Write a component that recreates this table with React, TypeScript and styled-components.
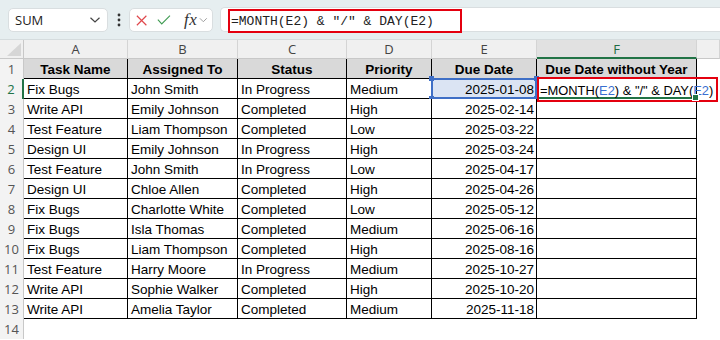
import React from "react";
import styled, { createGlobalStyle } from "styled-components";

const GlobalStyle = createGlobalStyle`
  html, body { margin: 0; padding: 0; background: #ffffff; overflow: hidden; }
  body { font-family: "Liberation Sans", Arial, sans-serif; }
`;

const Frame = styled.div`
  width: 720px;
  height: 340px;
  display: flex;
  flex-direction: column;
  overflow: hidden;
`;

const Toolbar = styled.div`
  height: 40px;
  box-sizing: border-box;
  background: #e6eef0;
  border-bottom: 1px solid #d5dcde;
  display: flex;
  align-items: flex-start;
  padding: 7px 0 0 8px;
`;

const NameBox = styled.div`
  width: 100px;
  height: 24px;
  margin-top: 1px;
  box-sizing: border-box;
  background: #fff;
  border: 1px solid #d9dee0;
  border-radius: 5px;
  display: flex;
  align-items: center;
  justify-content: space-between;
  padding: 0 6px 0 6px;
  font-family: "Open Sans", "Liberation Sans", sans-serif;
  font-size: 13px;
  color: #222;
`;

const Dots = styled.div`
  width: 21px;
  height: 26px;
  display: flex;
  align-items: center;
  justify-content: center;
`;

const FxBox = styled.div`
  width: 84px;
  height: 24px;
  margin-top: 1px;
  box-sizing: border-box;
  background: #fff;
  border: 1px solid #d9dee0;
  border-radius: 5px;
  display: flex;
  align-items: center;
  gap: 10px;
  padding: 0 4px 0 6px;
`;

const Fx = styled.span`
  font-family: "Liberation Serif", "DejaVu Serif", serif;
  font-style: italic;
  font-size: 17px;
  color: #333;
  margin-left: 3px;
  letter-spacing: 0.5px;
`;

const FormulaBox = styled.div`
  flex: 1;
  height: 25px;
  margin-left: 7px;
  box-sizing: border-box;
  background: #fff;
  border: 1px solid #d9dee0;
  border-right: none;
  border-radius: 5px 0 0 5px;
  position: relative;
`;

const FormulaHighlight = styled.div`
  position: absolute;
  left: 7px;
  top: 1px;
  width: 234px;
  height: 24px;
  box-sizing: border-box;
  border: 2px solid #e4000f;
  display: flex;
  align-items: center;
  padding-left: 1px;
  font-family: "Liberation Mono", "DejaVu Sans Mono", monospace;
  font-size: 13px;
  color: #222;
  white-space: pre;
`;

const Grid = styled.div`
  display: grid;
  grid-template-columns: 24px 104px 110px 109px 85px 105px 160px 23px;
  grid-template-rows: 19px repeat(14, 20px);
`;

const Corner = styled.div`
  background: #f0f0f0;
  border-bottom: 1px solid #c8c8c8;
  border-right: 1px solid #c8c8c8;
  box-sizing: border-box;
  display: flex;
  align-items: flex-end;
  justify-content: flex-end;
  padding: 0 2px 2px 0;
`;

const ColHeader = styled.div<{ $active?: boolean }>`
  box-sizing: border-box;
  background: ${(p) => (p.$active ? "#e1e1e1" : "#f0f0f0")};
  border-right: 1px solid #d4d4d4;
  border-bottom: ${(p) => (p.$active ? "2px solid #217346" : "1px solid #c8c8c8")};
  font-family: "Open Sans", "Liberation Sans", sans-serif;
  font-size: 13px;
  color: ${(p) => (p.$active ? "#1d6b43" : "#444")};
  display: flex;
  align-items: center;
  justify-content: center;
  padding-top: ${(p) => (p.$active ? "1px" : "0")};
`;

const RowHeader = styled.div<{ $active?: boolean }>`
  box-sizing: border-box;
  background: #f3f3f3;
  border-right: ${(p) => (p.$active ? "2px solid #217346" : "1px solid #c8c8c8")};
  font-family: "Open Sans", "Liberation Sans", sans-serif;
  font-size: 13px;
  color: ${(p) => (p.$active ? "#217346" : "#555")};
  display: flex;
  align-items: center;
  justify-content: center;
`;

const Cell = styled.div<{ $head?: boolean; $right?: boolean; $boxed?: boolean }>`
  box-sizing: border-box;
  position: relative;
  background: ${(p) => (p.$head ? "#d9d9d9" : "#fff")};
  border-right: ${(p) => (p.$boxed ? "1px solid #000" : "none")};
  border-bottom: ${(p) => (p.$boxed ? "1px solid #000" : "none")};
  font-size: 13.5px;
  font-weight: ${(p) => (p.$head ? 700 : 400)};
  color: #000;
  white-space: nowrap;
  display: flex;
  align-items: center;
  justify-content: ${(p) => (p.$head ? "center" : p.$right ? "flex-end" : "flex-start")};
  padding: 1px 3px 0 3px;
  padding-right: ${(p) => (p.$right ? "2px" : "3px")};
`;

const SelectedCell = styled(Cell)`
  background: #dbe4f3;
`;

const SelectionFrame = styled.div`
  position: absolute;
  left: -1px;
  top: -1px;
  right: -1px;
  bottom: -1px;
  border: 2px solid #3f6fc6;
  pointer-events: none;
`;

const Handle = styled.span<{ $x: "left" | "right"; $y: "top" | "bottom" }>`
  position: absolute;
  width: 5px;
  height: 5px;
  background: #3f6fc6;
  ${(p) => p.$x}: -4px;
  ${(p) => p.$y}: -4px;
`;

const ActiveCell = styled(Cell)`
  overflow: visible;
  border-bottom: 2px solid #217346;
  z-index: 2;
`;

const FillHandle = styled.span`
  position: absolute;
  right: -3px;
  bottom: -4px;
  width: 5px;
  height: 5px;
  background: #217346;
  border: 1px solid #fff;
`;

const InCellFormula = styled.div`
  position: absolute;
  left: 0px;
  top: -2px;
  width: 181px;
  height: 25px;
  box-sizing: border-box;
  border: 2px solid #e4000f;
  display: flex;
  align-items: center;
  padding: 1px 0 0 1px;
  font-size: 12.9px;
  color: #000;
  white-space: pre;
`;

const Ref = styled.span`
  color: #3a6fd0;
`;

const Blank = styled.div``;

const rows: [string, string, string, string, string][] = [
  ["Fix Bugs", "John Smith", "In Progress", "Medium", "2025-01-08"],
  ["Write API", "Emily Johnson", "Completed", "High", "2025-02-14"],
  ["Test Feature", "Liam Thompson", "Completed", "Low", "2025-03-22"],
  ["Design UI", "Emily Johnson", "In Progress", "High", "2025-03-24"],
  ["Test Feature", "John Smith", "In Progress", "Low", "2025-04-17"],
  ["Design UI", "Chloe Allen", "Completed", "High", "2025-04-26"],
  ["Fix Bugs", "Charlotte White", "Completed", "Low", "2025-05-12"],
  ["Fix Bugs", "Isla Thomas", "Completed", "Medium", "2025-06-16"],
  ["Fix Bugs", "Liam Thompson", "Completed", "High", "2025-08-16"],
  ["Test Feature", "Harry Moore", "In Progress", "Medium", "2025-10-27"],
  ["Write API", "Sophie Walker", "Completed", "High", "2025-10-20"],
  ["Write API", "Amelia Taylor", "Completed", "Medium", "2025-11-18"],
];

const headers = ["Task Name", "Assigned To", "Status", "Priority", "Due Date", "Due Date without Year"];

const Chevron = () => (
  <svg width="12" height="8" viewBox="0 0 12 8">
    <path d="M1.5 1.8 L6 6 L10.5 1.8" fill="none" stroke="#444" strokeWidth="1.2" />
  </svg>
);

export default function App() {
  return (
    <Frame>
      <GlobalStyle />
      <Toolbar>
        <NameBox>
          <span>SUM</span>
          <Chevron />
        </NameBox>
        <Dots>
          <svg width="4" height="16" viewBox="0 0 4 16">
            <circle cx="2" cy="3" r="1.4" fill="#333" />
            <circle cx="2" cy="8" r="1.4" fill="#333" />
            <circle cx="2" cy="13" r="1.4" fill="#333" />
          </svg>
        </Dots>
        <FxBox>
          <svg width="13" height="13" viewBox="0 0 13 13">
            <path d="M1 1 L12 12 M12 1 L1 12" stroke="#e0474c" strokeWidth="1.3" fill="none" />
          </svg>
          <svg width="16" height="12" viewBox="0 0 16 12">
            <path d="M1 5.5 L5.5 10.5 L15 1" stroke="#3f9b52" strokeWidth="1.3" fill="none" />
          </svg>
          <Fx>fx</Fx>
          <svg width="10" height="6" viewBox="0 0 10 6" style={{ marginLeft: -8 }}>
            <path d="M1 1 L5 5 L9 1" fill="none" stroke="#999" strokeWidth="1.1" />
          </svg>
        </FxBox>
        <FormulaBox>
          <FormulaHighlight>=MONTH(E2) &amp; "/" &amp; DAY(E2)</FormulaHighlight>
        </FormulaBox>
      </Toolbar>
      <Grid>
        <Corner>
          <svg width="14" height="13" viewBox="0 0 14 13">
            <polygon points="14,0 14,13 0,13" fill="#d6d6d6" />
          </svg>
        </Corner>
        {["A", "B", "C", "D", "E", "F", ""].map((c) => (
          <ColHeader key={c || "G"} $active={c === "F"}>
            {c}
          </ColHeader>
        ))}

        <RowHeader>1</RowHeader>
        {headers.map((h) => (
          <Cell key={h} $head $boxed>
            {h}
          </Cell>
        ))}
        <Blank />

        {rows.map((r, i) => {
          const n = i + 2;
          return (
            <React.Fragment key={n}>
              <RowHeader $active={n === 2}>{n}</RowHeader>
              <Cell $boxed>{r[0]}</Cell>
              <Cell $boxed>{r[1]}</Cell>
              <Cell $boxed>{r[2]}</Cell>
              <Cell $boxed>{r[3]}</Cell>
              {n === 2 ? (
                <SelectedCell $boxed $right>
                  {r[4]}
                  <SelectionFrame>
                    <Handle $x="left" $y="top" />
                    <Handle $x="right" $y="top" />
                    <Handle $x="left" $y="bottom" />
                    <Handle $x="right" $y="bottom" />
                  </SelectionFrame>
                </SelectedCell>
              ) : (
                <Cell $boxed $right>
                  {r[4]}
                </Cell>
              )}
              {n === 2 ? (
                <ActiveCell $boxed>
                  <InCellFormula>
                    =MONTH(<Ref>E2</Ref>) &amp; "/" &amp; DAY(<Ref>E2</Ref>)
                  </InCellFormula>
                  <FillHandle />
                </ActiveCell>
              ) : (
                <Cell $boxed />
              )}
              <Blank />
            </React.Fragment>
          );
        })}

        <RowHeader>14</RowHeader>
        <Blank />
        <Blank />
        <Blank />
        <Blank />
        <Blank />
        <Blank />
        <Blank />
      </Grid>
    </Frame>
  );
}
